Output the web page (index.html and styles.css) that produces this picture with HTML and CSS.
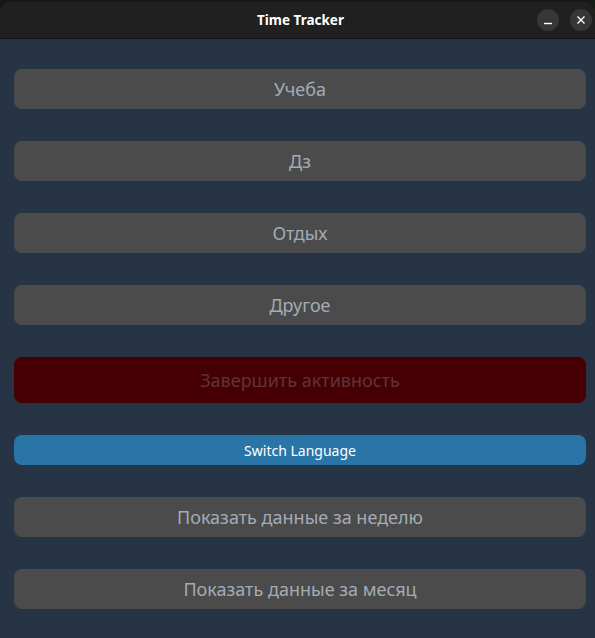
FILE: index.html
```html
<!DOCTYPE html>
<html>
<head>
<meta charset="utf-8">
<link rel="stylesheet" href="styles.css">
</head>
<body>
<div class="window">
  <div class="titlebar">
    <span class="title">Time Tracker</span>
    <div class="controls">
      <span class="ctl"><svg width="10" height="10" viewBox="0 0 10 10"><path d="M1 8.5h8" stroke="#fff" stroke-width="1.4"/></svg></span>
      <span class="ctl"><svg width="10" height="10" viewBox="0 0 10 10"><path d="M1.5 1.5l7 7M8.5 1.5l-7 7" stroke="#fff" stroke-width="1.4"/></svg></span>
    </div>
  </div>
  <div class="content">
    <button class="btn grey">Учеба</button>
    <button class="btn grey">Дз</button>
    <button class="btn grey">Отдых</button>
    <button class="btn grey">Другое</button>
    <button class="btn red">Завершить активность</button>
    <button class="btn blue">Switch Language</button>
    <button class="btn grey">Показать данные за неделю</button>
    <button class="btn grey">Показать данные за месяц</button>
  </div>
</div>
</body>
</html>
```
FILE: styles.css
```css
html, body { margin: 0; padding: 0; }
body {
  width: 595px;
  height: 638px;
  background: #141a14;
  font-family: "Noto Sans", "Open Sans", sans-serif;
  overflow: hidden;
}
.window {
  margin-top: 2px;
  height: 636px;
  display: flex;
  flex-direction: column;
}
.titlebar {
  height: 36px;
  background: #202020;
  border-radius: 10px 10px 0 0;
  border-bottom: 1px solid #141414;
  position: relative;
  display: flex;
  align-items: center;
  justify-content: center;
}
.title {
  color: #ffffff;
  font-weight: bold;
  font-size: 13.5px;
  margin-left: 6px;
}
.controls {
  position: absolute;
  right: 3px;
  top: 7px;
  display: flex;
  gap: 11px;
}
.ctl {
  width: 22px;
  height: 22px;
  border-radius: 50%;
  background: #373737;
  display: flex;
  align-items: center;
  justify-content: center;
}
.content {
  flex: 1;
  background: #263445;
  padding: 30px 9px 0 14px;
  display: flex;
  flex-direction: column;
  gap: 32px;
}
.btn {
  border: none;
  width: 572px;
  height: 40px;
  border-radius: 8px;
  font-family: "Noto Sans", "Open Sans", sans-serif;
  font-size: 18px;
  padding: 0;
}
.grey { background: #4b4b4b; color: #a3acb6; }
.red { background: #460003; color: #5e3436; height: 46px; }
.blue { background: #2a75a8; color: #ffffff; height: 30px; font-size: 14px; }
```
